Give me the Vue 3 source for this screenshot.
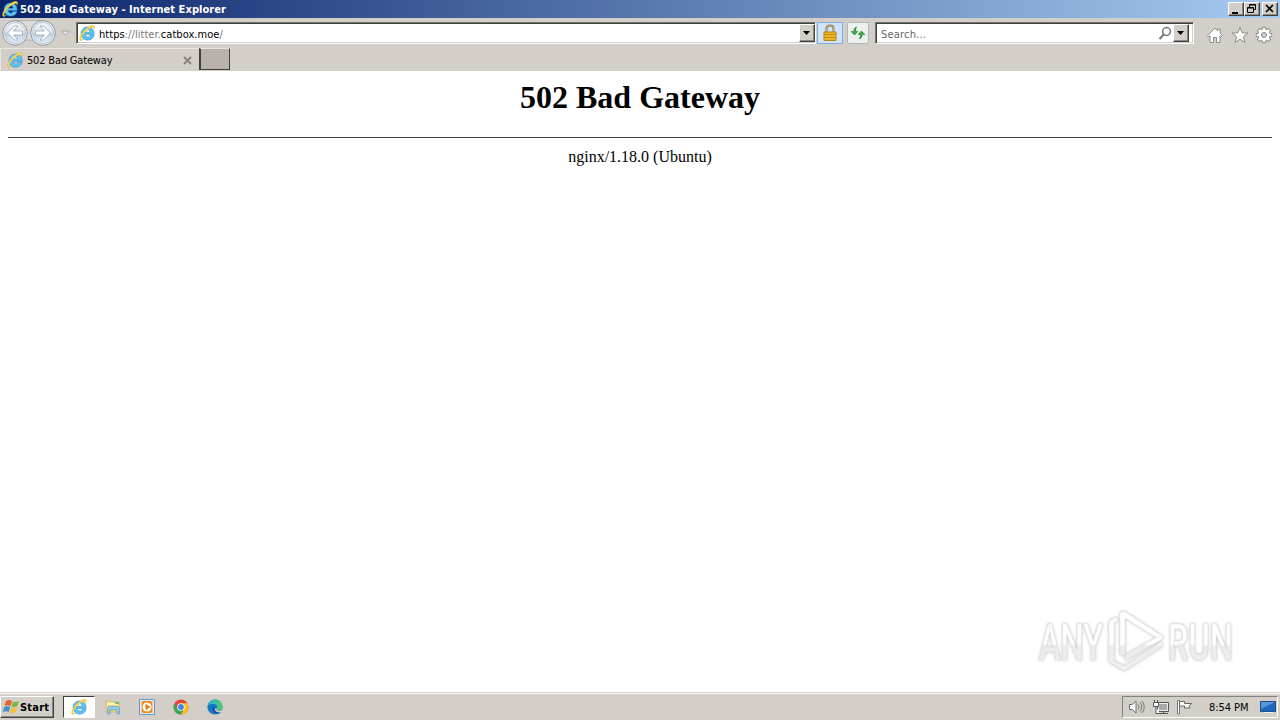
<template>
  <div class="desktop">
    <svg class="symbols" aria-hidden="true">
      <symbol id="ie" viewBox="0 0 16 16">
        <path d="M15 10.400c-.9 2.900-3.200 4.700-6.300 4.700-3.900 0-6.600-2.600-6.600-6.500s2.800-6.600 6.600-6.600c4 0 6.400 2.700 6.400 7.400H6.200c.1 1.600 1 2.500 2.500 2.500 1.100 0 1.900-.5 2.200-1.500zM6 7.200h5.200C11 5.500 10.100 4.600 8.600 4.600S6.200 5.500 6 7.200z" fill="#5cc3f2" stroke="#2a8cca" stroke-width=".6" />
        <path d="M1.200 15.400C-1.300 13.100 4.200 4.600 10.500 1.300c2.900-1.500 5-1.300 5.100.6 0 .9-.3 1.800-.7 2.500.2-1.600-.3-2.200-1.600-1.900C8.800 3.300 2.400 10.300 2.100 13.500c-.1 1.200.7 1.300 2.200.8-1.200.9-2.300 1.600-3.100 1.100z" fill="#f8d84a" stroke="#d2ae35" stroke-width=".3" />
      </symbol>
    </svg>

    <header class="title-bar">
      <svg class="title-icon"><use href="#ie" /></svg>
      <span class="title-text">502 Bad Gateway - Internet Explorer</span>
      <div class="window-buttons">
        <button class="win-btn"><svg viewBox="0 0 14 12"><path d="M3 9h6v2H3z" /></svg></button>
        <button class="win-btn"><svg viewBox="0 0 14 12"><path d="M4.500 4.500v-3h6v5h-2M4.500 2h6M2.500 5h6M2.500 4.500h6v5h-6z" fill="none" stroke="#000" /></svg></button>
        <button class="win-btn close"><svg viewBox="0 0 14 12"><path d="M3 2l7 7M10 2L3 9" fill="none" stroke="#000" stroke-width="1.600" /></svg></button>
      </div>
    </header>

    <nav class="nav-bar">
      <svg class="history" viewBox="0 0 72 29">
        <defs>
          <linearGradient id="orb" x1="0" y1="0" x2="0" y2="1">
            <stop offset="0" stop-color="#f4f6f8" />
            <stop offset=".48" stop-color="#dce4eb" />
            <stop offset=".5" stop-color="#b9cddc" />
            <stop offset="1" stop-color="#e2f3fc" />
          </linearGradient>
        </defs>
        <path d="M15 2.500h28v20q-14-1-28 0z" fill="#dddad7" stroke="#b5b4b5" />
        <g v-for="cx in [15, 43]" :key="cx">
          <circle :cx="cx" cy="15" r="12.300" fill="#f4f6f8" stroke="#8794a2" />
          <circle :cx="cx" cy="15" r="10.500" fill="url(#orb)" stroke="#bdc7d1" />
        </g>
        <path d="M7.500 15l7-7H18l-4.500 5h9v4h-9l4.500 5h-3.500zM50.500 15l-7-7H40l4.500 5h-9v4h9L40 22h3.500z" fill="#fff" stroke="#8e9eae" stroke-width=".7" />
        <path d="M61.500 13h8l-4 4.500z" fill="#e8e5e1" stroke="#aaa7a3" />
      </svg>
      <div class="field address">
        <svg class="page-icon"><use href="#ie" /></svg>
        <span class="url"><b>https</b>://litter.<b>catbox.moe</b>/</span>
        <button class="drop"><svg viewBox="0 0 12 14"><path d="M2 5h7L5.500 9z" /></svg></button>
      </div>
      <button class="lock">
        <svg viewBox="0 0 16 18">
          <path d="M4.500 8V4.500Q4.500 1.500 8 1.500t3.500 3V8" fill="none" stroke="#8b7445" stroke-width="2" />
          <path d="M4.500 8V4.500Q4.500 1.500 8 1.500t3.500 3V8" fill="none" stroke="#d9cba2" stroke-width=".7" />
          <path d="M2 8h12v8.500H2z" fill="#eeb527" stroke="#b78213" />
          <path d="M2.500 10.500h11M2.500 13.500h11" stroke="#bd8716" />
        </svg>
      </button>
      <button class="refresh">
        <svg viewBox="0 0 18 16">
          <path d="M7.500 2Q5 2.500 4.600 6.500H2L5.500 10 9 6.500H6.800Q6.500 4 7.500 2z" fill="#3ba546" stroke="#23782f" stroke-width=".5" />
          <path d="M10.500 14q2.500-.5 2.900-4.500H16L12.500 6 9 9.500h2.200q.3 2.500-.7 4.500z" fill="#3ba546" stroke="#23782f" stroke-width=".5" />
        </svg>
      </button>
      <div class="field search">
        <span class="placeholder">Search...</span>
        <svg class="magnifier" viewBox="0 0 14 14"><circle cx="8.500" cy="5.500" r="3.900" fill="#fff" stroke="#777" stroke-width="1.500" /><path d="M5.800 8.500L1.500 13" stroke="#777" stroke-width="2" /></svg>
        <button class="drop"><svg viewBox="0 0 12 14"><path d="M2 5h7L5.500 9z" /></svg></button>
      </div>
      <div class="tools">
        <svg viewBox="0 0 18 18"><path d="M1.500 9.500L9 2l2.800 2.800V3h2.400v4.200l2.300 2.300-1.300 1.200-1.200-1.200v7H10.500v-5h-3v5H4v-7l-1.200 1.200z" fill="#fff" stroke="#8b8b8b" /></svg>
        <svg viewBox="0 0 18 18"><path d="M9 1.200l2.100 5.600 5.900.2-4.700 3.700 1.700 5.800L9 13.200l-5 3.300 1.700-5.800L1 7l5.900-.2z" fill="#fff" stroke="#8b8b8b" /></svg>
        <svg viewBox="0 0 18 18">
          <path v-for="n in 8" :key="n" d="M7.300 4.500V1.300h3.400v3.200" :transform="`rotate(${n * 45} 9 9)`" fill="#fff" stroke="#8b8b8b" />
          <circle cx="9" cy="9" r="5.500" fill="#fff" />
          <circle cx="9" cy="9" r="2.500" fill="#d4cec8" stroke="#8b8b8b" />
        </svg>
      </div>
    </nav>

    <div class="tab-bar">
      <div class="tab">
        <svg class="page-icon"><use href="#ie" /></svg>
        <span class="tab-title">502 Bad Gateway</span>
        <svg class="tab-close" viewBox="0 0 9 9"><path d="M1 1l7 7M8 1L1 8" stroke="#85807c" stroke-width="1.800" /></svg>
      </div>
      <button class="new-tab"></button>
    </div>

    <main class="page">
      <h1>502 Bad Gateway</h1>
      <hr />
      <p>nginx/1.18.0 (Ubuntu)</p>
      <svg class="watermark" viewBox="0 0 210 74">
        <defs>
          <linearGradient id="mark" x1="0" y1="0" x2="0" y2="74" gradientUnits="userSpaceOnUse">
            <stop offset=".47" stop-color="#fff" />
            <stop offset=".5" stop-color="#ececec" />
            <stop offset="1" stop-color="#f3f3f3" />
          </linearGradient>
        </defs>
        <g class="mark-shape">
          <text x="7" y="51" textLength="64" lengthAdjust="spacingAndGlyphs">ANY</text>
          <text x="136" y="51" textLength="65" lengthAdjust="spacingAndGlyphs">RUN</text>
          <path d="M88 4l4-2 39 25.500-2 4L93 9v37h-5z" />
          <path d="M93 46l36-20 2 3.500-38 22z" />
          <path d="M77 12l8-4v4l-3 2v38l10 5 37-24 2 4-39 25-15-9z" />
        </g>
      </svg>
    </main>

    <footer class="taskbar">
      <button class="start">
        <svg viewBox="0 0 18 16">
          <path d="M4 2q3-2 6 0L8.500 7q-3-1.500-6 0z" fill="#e9602b" />
          <path d="M11 2.500q3 1.500 6-.5l-1.500 5q-3 2-6 .5z" fill="#79b843" />
          <path d="M2.200 8q3-1.500 6 0l-1.500 5q-3-1.500-6 0z" fill="#3e91d1" />
          <path d="M9.200 8.500q3 1.500 6-.5l-1.500 5q-3 2-6 .5z" fill="#f4c136" />
        </svg>
        <span>Start</span>
      </button>
      <div class="launcher active"><svg><use href="#ie" /></svg></div>
      <div class="launcher">
        <svg viewBox="0 0 16 16"><path d="M1 2h5l1 1h7v10H1z" fill="#f5dc83" stroke="#caa850" stroke-width=".6" /><path d="M2 4h11v2H2z" fill="#fff5c7" /><path d="M10 3h4v2h-4z" fill="#7fbf68" /><path d="M2.500 15V9.500q0-2 2-2h8q2 0 2 2V15H12v-4H5v4z" fill="#8fcaeb" stroke="#5694b8" stroke-width=".6" /></svg>
      </div>
      <div class="launcher">
        <svg viewBox="0 0 16 16"><path d="M.5.5h15v15H.5z" fill="#dcecf8" stroke="#6498c4" /><path d="M2.500 2.500h11v11h-11z" fill="#f08a17" stroke="#f6c58b" /><path d="M4 2h8v12H4z" fill="#f08a17" /><circle cx="8" cy="8" r="4.500" fill="#fff" /><path d="M6.500 4.800v6.400L11.500 8z" fill="#e27a10" /></svg>
      </div>
      <div class="launcher">
        <svg viewBox="0 0 16 16"><circle cx="8" cy="8" r="7.500" fill="#e84435" /><path d="M1.500 4.250A7.500 7.500 0 0 0 8 15.500l3.200-5.700H4.700z" fill="#37a853" /><path d="M8 4.300h6.500A7.500 7.500 0 0 1 8 15.500l3.300-5.700z" fill="#fbc116" /><circle cx="8" cy="8" r="3.800" fill="#fff" /><circle cx="8" cy="8" r="2.900" fill="#4285e8" /></svg>
      </div>
      <div class="launcher">
        <svg viewBox="0 0 16 16">
          <defs><linearGradient id="wave"><stop offset="0" stop-color="#29a8dc" /><stop offset="1" stop-color="#58cc69" /></linearGradient></defs>
          <circle cx="8" cy="8" r="7.600" fill="#1477c6" />
          <path d="M.5 7C1.500 2.500 4.500.4 8 .4c4.600 0 7.600 3.300 7.600 7 0 2.600-1.800 4-4 4-1.700 0-2.600-.7-2.100-1.500 1.900-3.100-.7-5-3.700-4.800C3.300 5 1.200 6 .5 7z" fill="url(#wave)" />
          <path d="M5.900 7.200C4.600 10.800 7 15 11.500 14.700c1.200-.4 2.200-1 2.900-2C10.500 14 7.500 12 7.700 9.500z" fill="#12509d" />
          <path d="M9.600 8.900c-.8 1.800.6 2.900 2.900 2.800 1.500 0 2.400-.5 3-1.200L16 13l-1.500.2c-4 .8-6.500-.7-6.600-2.700 0-.8.7-1.300 1.700-1.600z" fill="#d4cec8" />
        </svg>
      </div>
      <div class="tray">
        <svg class="speaker" viewBox="0 0 18 16"><path d="M1.500 5.500h3L8 2v12l-3.500-3.500h-3z" fill="#fff" stroke="#6c6c6c" /><path d="M10 5.500q2 2.500 0 5M12 3.500q3.500 4.500 0 9M14 2q4.500 6 0 12" fill="none" stroke="#777" /></svg>
        <svg class="network" viewBox="0 0 17 16"><path d="M4.500 3.500h11v9h-11z" fill="#eee" stroke="#555" /><path d="M6 5h8v6H6z" fill="#aaa" /><path d="M6 14.500h9M10.500 12v2" stroke="#555" /><path d="M.5 3.500h5v4h-5zM1.500 1v2M4.500 1v2M3 8v6.500h4" fill="#fff" stroke="#555" /></svg>
        <svg class="flag" viewBox="0 0 17 16"><path d="M1.500 1.500h2V15h-2z" fill="#fff" stroke="#777" /><path d="M3.500 2.500h5v2h7l-2.500 2.500 1 2H8.500v-2h-5z" fill="#fff" stroke="#666" /></svg>
        <span class="clock">8:54 PM</span>
        <svg class="show-desktop" viewBox="0 0 16 14"><path d="M.5 1.500h15v10H.5z" fill="#1f69bc" stroke="#19518f" /><path d="M1 2h14L1 9z" fill="#5797d7" /><path d="M4 12.500h9" stroke="#eee" /></svg>
      </div>
    </footer>
  </div>
</template>

<script setup>
</script>

<style>
body {
  margin: 0;
  overflow: hidden;
}
</style>

<style scoped>
.desktop {
  width: 1280px;
  height: 720px;
  display: flex;
  flex-direction: column;
  background: #d4cec8;
  font: 11px "DejaVu Sans Condensed", "DejaVu Sans", sans-serif;
  font-stretch: condensed;
  color: #000;
}

.desktop * {
  box-sizing: border-box;
}

button {
  padding: 0;
  margin: 0;
  font: inherit;
}

svg {
  display: block;
  flex-shrink: 0;
}

.symbols {
  position: absolute;
  width: 0;
  height: 0;
}

.page-icon,
.title-icon {
  width: 16px;
  height: 16px;
}

/* Title bar */
.title-bar {
  height: 18px;
  flex-shrink: 0;
  display: flex;
  align-items: center;
  gap: 2px;
  padding: 0 2px;
  background: linear-gradient(to right, #0a246a, #a6caf0);
}

.title-text {
  color: #fff;
  font-weight: bold;
  white-space: nowrap;
  letter-spacing: 0.06px;
}

.window-buttons {
  display: flex;
  margin-left: auto;
}

.win-btn,
.drop,
.start {
  background: #d4cec8;
  border: 1px solid;
  border-color: #fff #404040 #404040 #fff;
  box-shadow: inset -1px -1px #8c8884;
}

.win-btn {
  width: 16px;
  height: 14px;
}

.win-btn svg {
  width: 14px;
  height: 12px;
}

.win-btn.close {
  margin-left: 2px;
}

/* Navigation */
.nav-bar {
  height: 30px;
  flex-shrink: 0;
  display: flex;
  align-items: flex-start;
}

.history {
  width: 72px;
  height: 29px;
  margin-right: 4px;
}

.field {
  height: 22px;
  margin-top: 4px;
  display: flex;
  align-items: center;
  background: #fff;
  border: 1px solid;
  border-color: #77736f #fff #fff #77736f;
  box-shadow: inset 1px 1px #403e3c, inset -1px -1px #d4cec8;
}

.address {
  width: 740px;
  padding: 0 0 0 2px;
}

.url {
  margin: 2px 0 0 4px;
  color: #777;
  letter-spacing: 0.05px;
}

.url b {
  color: #000;
  font-weight: normal;
}

.drop {
  width: 16px;
  height: 18px;
  margin-left: auto;
}

.drop svg {
  width: 12px;
  height: 14px;
  margin-left: 1px;
}

.lock {
  width: 26px;
  height: 22px;
  margin: 4px 0 0 1px;
  display: flex;
  align-items: center;
  justify-content: center;
  background: #cfe3fa;
  border: 1px solid #81aee1;
}

.lock svg {
  width: 16px;
  height: 18px;
}

.refresh {
  width: 22px;
  height: 22px;
  margin: 4px 0 0 4px;
  display: flex;
  align-items: center;
  justify-content: center;
  background: #edf1ee;
  border: 1px solid #b2b6b8;
  border-radius: 2px;
}

.refresh svg {
  width: 18px;
  height: 16px;
}

.search {
  width: 319px;
  margin-left: 6px;
  padding: 0 4px;
}

.placeholder {
  margin: 2px 0 0 1px;
  color: #666;
  letter-spacing: 0.2px;
}

.magnifier {
  width: 14px;
  height: 14px;
  margin-left: auto;
}

.search .drop {
  margin-left: 1px;
}

.tools {
  display: flex;
  gap: 7px;
  margin: 8px 0 0 12px;
}

.tools svg {
  width: 18px;
  height: 18px;
}

.tools svg:last-child {
  margin-left: -1px;
}

/* Tabs */
.tab-bar {
  height: 23px;
  flex-shrink: 0;
  display: flex;
}

.tab {
  width: 199px;
  display: flex;
  align-items: center;
  padding: 1px 6px 0 6px;
  border: 1px solid;
  border-color: #eae7e3 #d4cec8 #d4cec8 #eae7e3;
}

.tab-title {
  margin-left: 4px;
  letter-spacing: -0.18px;
}

.tab-close {
  width: 9px;
  height: 9px;
  margin-left: auto;
}

.new-tab {
  width: 31px;
  height: 22px;
  background: #b9b1ac;
  border: solid #403e3c;
  border-width: 0 1px 1px 2px;
  border-top: 1px solid #e5e1dd;
}

/* Page */
.page {
  position: relative;
  flex: 1;
  padding: 8px;
  background: #fff;
  text-align: center;
  font: 16px "Liberation Serif", serif;
}

.page h1 {
  margin: 0 0 21px;
  font-size: 32px;
  line-height: 37px;
}

.page hr {
  height: 1px;
  margin: 0;
  border: 0;
  background: #444;
}

.page p {
  margin: 10px 0 0;
  line-height: 18px;
}

.watermark {
  position: absolute;
  left: 1032px;
  top: 538px;
  width: 210px;
  height: 74px;
  overflow: visible;
}

.mark-shape {
  fill: url(#mark);
  stroke: #e4e4e4;
  stroke-width: 0.6px;
  filter: drop-shadow(0 0 1.5px #bbb);
}

.mark-shape text {
  font: 500 50px Roboto, sans-serif;
}

/* Taskbar */
.taskbar {
  height: 28px;
  flex-shrink: 0;
  display: flex;
  align-items: flex-start;
  padding: 3px 2px 0 0;
  border-top: 1px solid #d4cec8;
  box-shadow: inset 0 1px #fff;
}

.start {
  width: 54px;
  height: 22px;
  display: flex;
  align-items: center;
  font-weight: bold;
  margin-right: 9px;
  padding-left: 1px;
  letter-spacing: 0.2px;
}

.start svg {
  width: 18px;
  height: 16px;
}

.launcher {
  width: 32px;
  height: 22px;
  margin-right: 2px;
  display: flex;
  align-items: center;
  justify-content: center;
}

.launcher.active {
  background: #fff;
  border: 1px solid;
  border-color: #404040 #fff #fff #404040;
}

.launcher svg {
  width: 16px;
  height: 16px;
}

.tray {
  width: 156px;
  height: 22px;
  margin-left: auto;
  display: flex;
  align-items: center;
  padding-left: 5px;
  border: 1px solid;
  border-color: #85817d #fff #fff #85817d;
}

.speaker {
  width: 18px;
  height: 16px;
}

.network {
  width: 17px;
  height: 16px;
  margin-left: 7px;
}

.flag {
  width: 17px;
  height: 16px;
  margin-left: 6px;
}

.clock {
  margin-left: 16px;
  width: 42px;
  white-space: nowrap;
  letter-spacing: -0.05px;
}

.show-desktop {
  width: 16px;
  height: 14px;
  margin-left: 9px;
}
</style>
